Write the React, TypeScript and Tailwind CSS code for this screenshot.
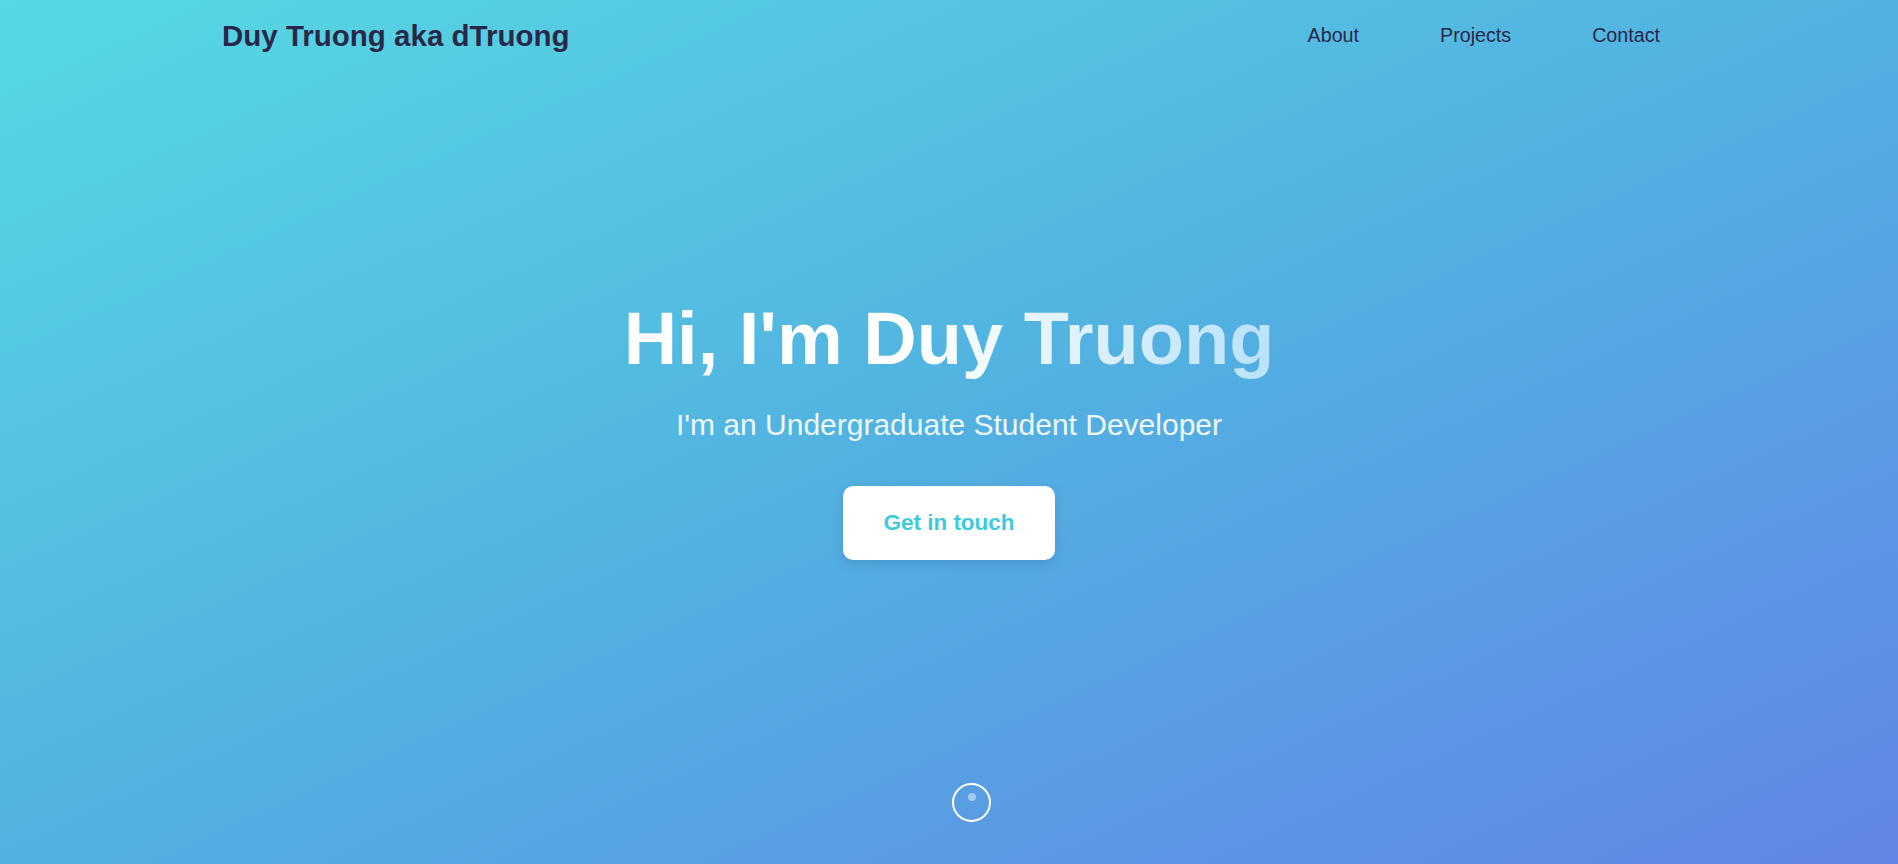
import { useState } from "react";

const links = ["About", "Projects", "Contact"];

export default function App() {
  const [active, setActive] = useState<string | null>(null);

  return (
    <div className="relative h-[864px] w-full overflow-hidden bg-[linear-gradient(to_bottom_right,#56d9e2_0%,#52b1e1_50%,#6284e6_100%)] font-['Liberation_Sans',Arial,sans-serif]">
      <header className="absolute inset-x-0 top-0 flex h-[72px] items-center justify-between pl-[222px] pr-[238px]">
        <a href="#" className="text-[29.5px] font-bold leading-none text-[#2a2849]">
          Duy Truong aka dTruong
        </a>
        <nav className="flex items-center gap-[81px]">
          {links.map(link => (
            <a
              key={link}
              href={`#${link.toLowerCase()}`}
              onClick={() => setActive(link)}
              className={`text-[19.7px] leading-none text-[#2a2849] ${active === link ? "underline" : ""}`}
            >
              {link}
            </a>
          ))}
        </nav>
      </header>

      <main className="flex h-full flex-col items-center justify-center pb-[2px] text-center">
        <h1 className="mb-[22px] bg-[linear-gradient(90deg,#ffffff_0%,#ffffff_45%,#b9e2fa_100%)] bg-clip-text pb-[12px] text-[74px] font-bold leading-none text-transparent">
          Hi, I'm Duy Truong
        </h1>
        <p className="mb-[46px] text-[30px] leading-none text-white/90">
          I'm an Undergraduate Student Developer
        </p>
        <a
          href="#contact"
          className="rounded-[10px] bg-white px-10 py-6 text-[22.5px] font-bold leading-[26px] text-[#3ccbda] shadow-[0_4px_12px_rgba(0,40,90,0.15)]"
        >
          Get in touch
        </a>
      </main>

      <div className="absolute bottom-[42px] left-[952px] flex h-[39px] w-[39px] justify-center rounded-full border-2 border-white pt-[8px]">
        <span className="h-[8px] w-[8px] rounded-full bg-white/45" />
      </div>
    </div>
  );
}
